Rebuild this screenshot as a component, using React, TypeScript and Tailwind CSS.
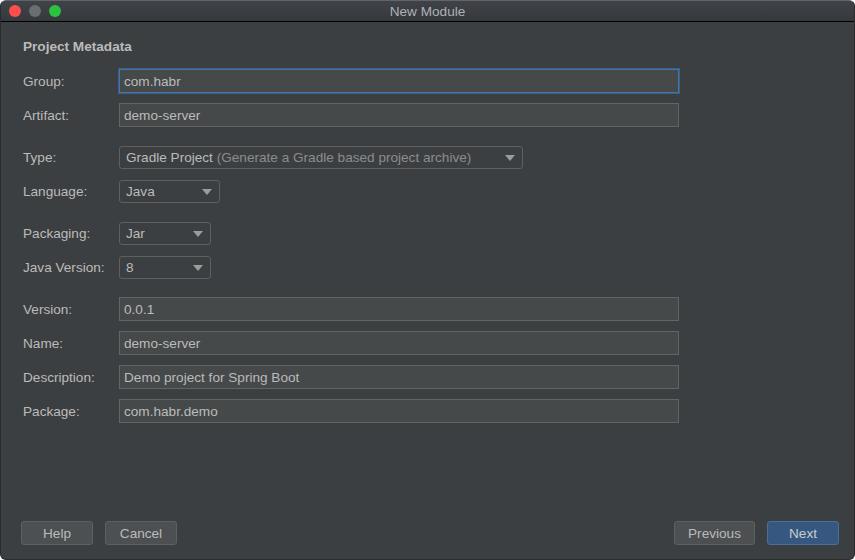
import React from 'react';

type Field = { label: string; value?: string; focused?: boolean };

function Arrow() {
  return (
    <svg width="10" height="6" viewBox="0 0 10 6" className="shrink-0">
      <path d="M0 0 H10 L5 6 Z" fill="#9c9c9c" />
    </svg>
  );
}

function TextField({ value, focused }: { value: string; focused?: boolean }) {
  return (
    <div
      className={`h-[24px] w-[560px] bg-[#45494a] flex items-center pl-[4px] pt-[1px] ${
        focused ? 'border border-[#4573a3] shadow-[0_0_0_1px_#3a6189]' : 'border border-[#646464]'
      }`}
    >
      <span className="text-[#bbbbbb]">{value}</span>
    </div>
  );
}

function Combo({ width, children }: { width: string; children: React.ReactNode }) {
  return (
    <div className={`h-[23px] ${width} border border-[#5e6060] rounded-[3px] bg-[#3c3f41] flex items-center justify-between pl-[6px] pr-[7px]`}>
      <span className="truncate pt-[1px]">{children}</span>
      <Arrow />
    </div>
  );
}

function Row({ label, children }: { label: string; children: React.ReactNode }) {
  return (
    <div className="flex items-center">
      <div className="w-[96px] shrink-0 text-[#bbbbbb] pt-[1px]">{label}</div>
      {children}
    </div>
  );
}

function Button({ label, primary, width }: { label: string; primary?: boolean; width: string }) {
  return (
    <div
      className={`h-[24px] ${width} rounded-[3px] flex items-center justify-center border pt-[1px] ${
        primary ? 'bg-[#365880] border-[#4c6f95] text-[#c8ccd0]' : 'bg-[#4c5052] border-[#5e6060] text-[#bbbbbb]'
      }`}
    >
      {label}
    </div>
  );
}

const topFields: Field[] = [
  { label: 'Group:', value: 'com.habr', focused: true },
  { label: 'Artifact:', value: 'demo-server' },
];

const bottomFields: Field[] = [
  { label: 'Version:', value: '0.0.1' },
  { label: 'Name:', value: 'demo-server' },
  { label: 'Description:', value: 'Demo project for Spring Boot' },
  { label: 'Package:', value: 'com.habr.demo' },
];

export default function App() {
  return (
    <div className="w-[855px] h-[560px] bg-white font-['Liberation_Sans',Arial,sans-serif] text-[13.6px] leading-[16px]">
      <div className="w-full h-full flex flex-col rounded-[6px] overflow-hidden bg-[#3c3f41] border border-[#2a2c2e] border-t-[#626568]">
        {/* title bar */}
        <div className="h-[21px] shrink-0 relative flex items-center justify-center bg-gradient-to-b from-[#3f4246] to-[#35383c] border-b border-black">
          <div className="absolute left-[8px] top-[4px] flex gap-[8px]">
            <div className="w-[12px] h-[12px] rounded-full bg-[#fc4f4c]" />
            <div className="w-[12px] h-[12px] rounded-full bg-[#6b6d70]" />
            <div className="w-[12px] h-[12px] rounded-full bg-[#2ac33f]" />
          </div>
          <span className="text-[#aeb2b8] pt-[1px]">New Module</span>
        </div>

        <div className="flex flex-col flex-1 pl-[22px]">
          <div className="mt-[17px] -mb-[1px] font-bold text-[#bbbbbb]">Project Metadata</div>

          <div className="mt-[15px] flex flex-col gap-[10px]">
            {topFields.map((f) => (
              <Row key={f.label} label={f.label}>
                <TextField value={f.value ?? ''} focused={f.focused} />
              </Row>
            ))}
          </div>

          <div className="mt-[19px] flex flex-col gap-[11px]">
            <Row label="Type:">
              <Combo width="w-[404px]">
                <span className="text-[#bbbbbb]">Gradle Project</span>{' '}
                <span className="text-[#8c8c8c]">(Generate a Gradle based project archive)</span>
              </Combo>
            </Row>
            <Row label="Language:">
              <Combo width="w-[101px]">
                <span className="text-[#bbbbbb]">Java</span>
              </Combo>
            </Row>
          </div>

          <div className="mt-[19px] flex flex-col gap-[11px]">
            <Row label="Packaging:">
              <Combo width="w-[92px]">
                <span className="text-[#bbbbbb]">Jar</span>
              </Combo>
            </Row>
            <Row label="Java Version:">
              <Combo width="w-[92px]">
                <span className="text-[#bbbbbb]">8</span>
              </Combo>
            </Row>
          </div>

          <div className="mt-[18px] flex flex-col gap-[10px]">
            {bottomFields.map((f) => (
              <Row key={f.label} label={f.label}>
                <TextField value={f.value ?? ''} />
              </Row>
            ))}
          </div>

          <div className="mt-auto mb-[14px] flex items-center pr-[15px] -ml-[2px]">
            <div className="flex gap-[12px]">
              <Button label="Help" width="w-[72px]" />
              <Button label="Cancel" width="w-[72px]" />
            </div>
            <div className="ml-auto flex gap-[12px]">
              <Button label="Previous" width="w-[81px]" />
              <Button label="Next" width="w-[72px]" primary />
            </div>
          </div>
        </div>
      </div>
    </div>
  );
}
